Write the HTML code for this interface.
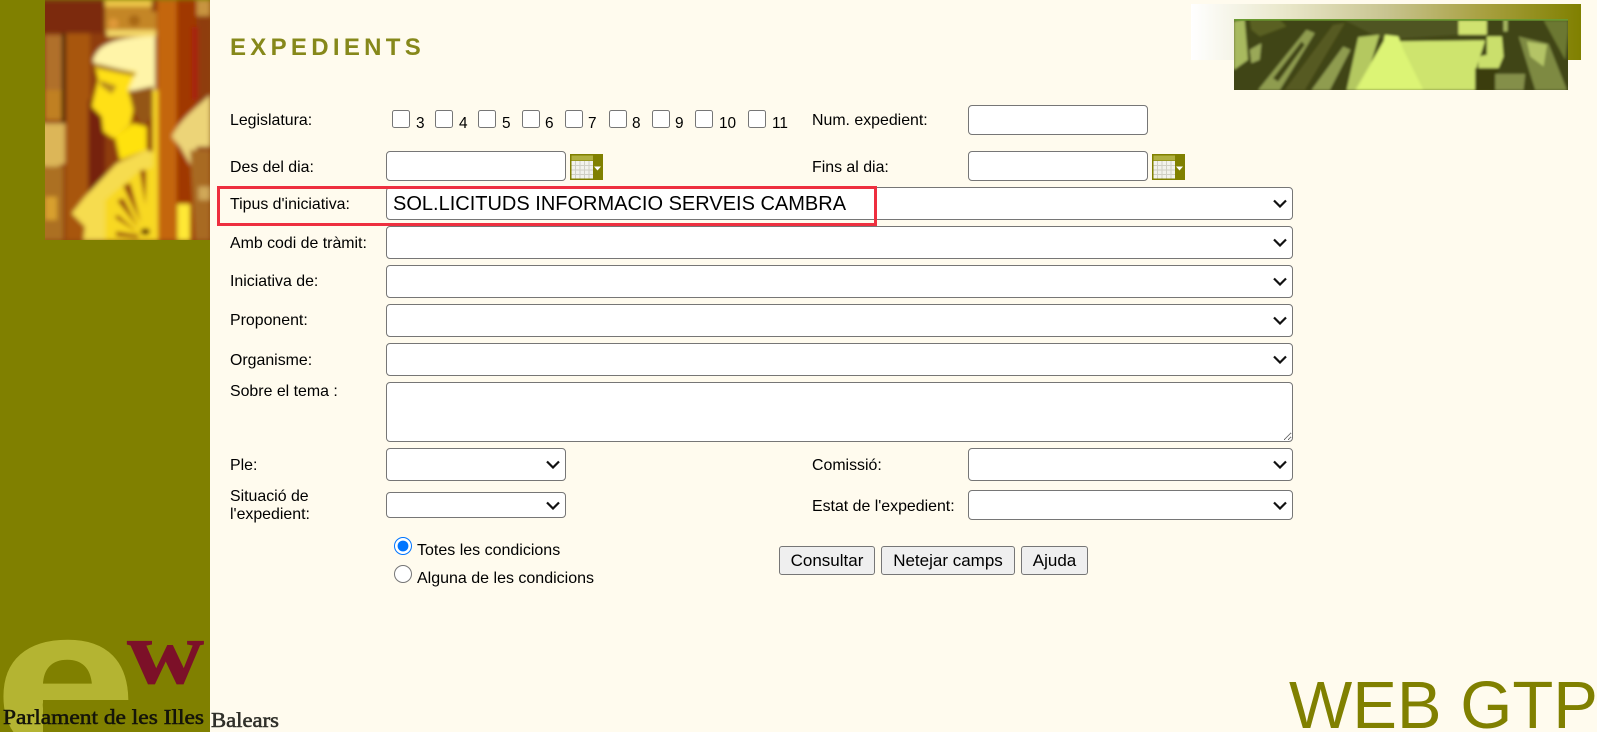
<!DOCTYPE html>
<html lang="ca">
<head>
<meta charset="utf-8">
<title>Expedients</title>
<style>
html,body{margin:0;padding:0;width:1597px;height:732px;overflow:hidden;background:#fffbee;}
body{position:relative;font-family:"Liberation Sans",Arial,sans-serif;color:#000;font-size:15.9px;}
.a{position:absolute;}
.l{position:absolute;line-height:20px;height:20px;white-space:nowrap;}
input[type=text],select,textarea{position:absolute;box-sizing:border-box;border:1px solid #767676;border-radius:4px;background:#fff;margin:0;font-family:"Liberation Sans",Arial,sans-serif;}
select{-webkit-appearance:none;appearance:none;padding:0 0 0 6px;}
input[type=checkbox],input[type=radio]{position:absolute;margin:0;}
input[type=checkbox]{width:18px;height:18px;}
input[type=radio]{width:18px;height:18px;}
button{position:absolute;box-sizing:border-box;border:1px solid #767676;border-radius:3px;background:#efefef;margin:0;padding:0;font:17px "Liberation Sans",Arial,sans-serif;color:#000;top:546px;height:29px;}
.sel{left:386px;width:907px;}
svg{display:block;}
.c{position:absolute;pointer-events:none;}
</style>
</head>
<body>
<div class="a" style="left:0;top:0;width:210px;height:732px;background:#808000;"></div>

<svg class="a" style="left:45px;top:0" width="165" height="240" viewBox="15 0 495 720">
<defs><filter id="b" x="-5%" y="-5%" width="110%" height="110%"><feGaussianBlur stdDeviation="7"/></filter>
<clipPath id="pc"><rect x="15" y="0" width="495" height="720"/></clipPath></defs>
<g clip-path="url(#pc)"><g filter="url(#b)">
<rect x="0" y="0" width="520" height="730" fill="#8f3d08"/>
<rect x="0" y="0" width="200" height="100" fill="#7c2a08"/>
<rect x="15" y="105" width="52" height="170" fill="#b0702a"/>
<rect x="66" y="100" width="10" height="270" fill="#2c1204"/>
<rect x="15" y="270" width="50" height="90" fill="#c08020"/>
<path d="M0 370H75V490L40 505 0 495Z" fill="#dcb658"/>
<path d="M0 500H70V720H0Z" fill="#ac7022"/>
<rect x="15" y="590" width="36" height="70" fill="#d8a02e"/>
<rect x="78" y="100" width="72" height="620" fill="#a8560f"/>
<rect x="145" y="300" width="50" height="300" fill="#76240a"/>
<path d="M195 0H335V35H350V95H195V50Z" fill="#c48628"/>
<path d="M195 0H335V20H195Z" fill="#efc848"/>
<circle cx="220" cy="70" r="15" fill="#e09a38"/><circle cx="283" cy="62" r="17" fill="#a86818"/>
<rect x="200" y="90" width="148" height="20" fill="#f4d868"/>
<path d="M158 185C170 140 205 112 345 108V270L265 272 250 215 170 192Z" fill="#fff4a8"/>
<path d="M165 195L290 215 265 270 270 290 280 330 270 375 220 415 190 395 185 350 155 320 175 240Z" fill="#ffe018"/>
<path d="M170 190L290 220 280 228 170 205Z" fill="#a87a20"/>
<path d="M178 240L230 258 215 282 183 258Z" fill="#b88a1e"/>
<path d="M265 275L340 258V345L310 380 288 345Z" fill="#945612"/>
<path d="M225 410L280 370 320 380V450L240 480Z" fill="#ffe210"/>
<path d="M95 640L135 590 230 490 320 450 350 460V720H130L135 680Z" fill="#f6dc50"/>
<path d="M195 720V600L300 510 350 500V720Z" fill="#f8d820"/>
<path d="M300 512L318 510 316 615ZM250 558L270 548 302 668ZM232 602L250 595 294 682ZM224 652L234 645 292 697ZM228 695L298 705 292 714 228 708Z" fill="#902808"/>
<ellipse cx="316" cy="695" rx="14" ry="10" fill="#5a1806"/>
<rect x="352" y="0" width="58" height="720" fill="#c4660c"/>
<rect x="338" y="270" width="16" height="450" fill="#f8d828"/>
<rect x="410" y="0" width="60" height="720" fill="#a03806"/>
<rect x="455" y="80" width="20" height="220" fill="#a82408"/>
<rect x="412" y="612" width="38" height="108" fill="#ffe836"/>
<path d="M470 0H510V48H470Z" fill="#c89440"/>
<path d="M395 410C420 360 460 330 510 285V440H470L460 510 420 440Z" fill="#ecd478"/>
<path d="M450 450H510V720H465Z" fill="#a86a20"/>
<rect x="475" y="560" width="35" height="40" fill="#d0a858"/>
</g></g>
</svg>

<svg class="a" style="left:0;top:620px" width="300" height="112" viewBox="0 0 300 112">
<defs><clipPath id="lc"><path d="M0 0H210V80H43V112H0Z"/></clipPath></defs>
<g clip-path="url(#lc)"><text transform="translate(-5,131) scale(1.42,1.15)" font-family="Liberation Sans" font-weight="bold" font-size="178" fill="#b4b432" stroke="#b4b432" stroke-width="2">e</text></g>
<text x="127" y="63" font-family="Liberation Serif" font-weight="bold" font-size="91" fill="#7c1028" stroke="#7c1028" stroke-width=".8" textLength="77" lengthAdjust="spacingAndGlyphs">w</text>
<text x="3" y="104" font-family="Liberation Serif" font-size="21" fill="#14140a" stroke="#14140a" stroke-width=".55" textLength="201" lengthAdjust="spacingAndGlyphs">Parlament de les Illes</text>
<text x="211" y="107" font-family="Liberation Serif" font-size="21" fill="#30302a" stroke="#30302a" stroke-width=".55" textLength="68" lengthAdjust="spacingAndGlyphs">Balears</text>
</svg>

<div class="a" style="left:230px;top:34px;font-weight:bold;font-size:24px;line-height:28px;letter-spacing:4.3px;color:#86881a;white-space:nowrap;">EXPEDIENTS</div>

<div class="a" style="left:1191px;top:4px;width:390px;height:56px;background:linear-gradient(90deg,#fff 0%,#e8e6c8 25%,#c8c490 50%,#a8a040 75%,#808000 100%);"></div>
<svg class="a" style="left:1234px;top:19px" width="334" height="71" viewBox="193 58 1000 212" preserveAspectRatio="none">
<defs><filter id="b2"><feGaussianBlur stdDeviation="4"/></filter><clipPath id="tc"><rect x="193" y="58" width="1000" height="212"/></clipPath></defs>
<g clip-path="url(#tc)"><g filter="url(#b2)">
<rect x="180" y="50" width="1030" height="230" fill="#3f4412"/>
<path d="M193 65L225 60 235 180 193 210Z" fill="#a8ba5e"/>
<path d="M240 60H330L350 80 270 110 245 90Z" fill="#5a6024"/>
<path d="M240 150L275 130 270 180 245 190Z" fill="#9aa858"/>
<path d="M265 270L410 90 435 100 330 270Z" fill="#8f9c50"/>
<path d="M310 235L395 125 405 135 325 245Z" fill="#3f4412"/>
<path d="M345 270L490 75 525 70 405 270Z" fill="#565a20"/>
<path d="M425 270L520 140 542 150 480 270Z" fill="#8f9c50"/>
<path d="M520 60H870V105L640 120 600 100Z" fill="#4f5420"/>
<path d="M530 270L565 112 628 105 600 200 570 270Z" fill="#b4c860"/>
<path d="M640 125L945 122 920 200 915 270H555Z" fill="#cee46e"/>
<path d="M645 105L685 110 700 150 760 270H560L640 130Z" fill="#dcf474"/>
<rect x="865" y="62" width="85" height="43" fill="#d0e270"/>
<path d="M950 110H995L1000 170 985 205H925V170L950 165Z" fill="#cadf6c"/>
<path d="M915 205H985L975 270H915Z" fill="#3a3e10"/>
<path d="M975 222H1065L1060 270H975Z" fill="#848f48"/>
<path d="M1045 110L1135 132 1190 270H1095L1070 190Z" fill="#7e8a42"/>
<path d="M1070 125L1130 135 1120 200 1080 170Z" fill="#b4c466"/>
<path d="M1080 62L1120 62 1185 180 1193 100V62Z" fill="#6c7830"/>
<rect x="1000" y="60" width="12" height="35" fill="#a8b860"/>
</g></g>
<rect x="193" y="58" width="1000" height="5" fill="#6a9a30"/>
</svg>

<div class="l" style="left:230px;top:111px">Legislatura:</div>
<input type="checkbox" style="left:392px;top:110px">
<div class="l" style="left:416px;top:114px;font-size:15.4px">3</div>
<input type="checkbox" style="left:435px;top:110px">
<div class="l" style="left:459px;top:114px;font-size:15.4px">4</div>
<input type="checkbox" style="left:478px;top:110px">
<div class="l" style="left:502px;top:114px;font-size:15.4px">5</div>
<input type="checkbox" style="left:522px;top:110px">
<div class="l" style="left:545px;top:114px;font-size:15.4px">6</div>
<input type="checkbox" style="left:565px;top:110px">
<div class="l" style="left:588px;top:114px;font-size:15.4px">7</div>
<input type="checkbox" style="left:609px;top:110px">
<div class="l" style="left:632px;top:114px;font-size:15.4px">8</div>
<input type="checkbox" style="left:652px;top:110px">
<div class="l" style="left:675px;top:114px;font-size:15.4px">9</div>
<input type="checkbox" style="left:695px;top:110px">
<div class="l" style="left:719px;top:114px;font-size:15.4px">10</div>
<input type="checkbox" style="left:748px;top:110px">
<div class="l" style="left:772px;top:114px;font-size:15.4px">11</div>

<div class="l" style="left:812px;top:111px">Num. expedient:</div>
<input type="text" style="left:968px;top:105px;width:180px;height:30px">

<div class="l" style="left:230px;top:158px">Des del dia:</div>
<input type="text" style="left:386px;top:151px;width:180px;height:30px">
<svg class="a" style="left:570px;top:154px" width="33" height="26" viewBox="0 0 33 26">
<rect width="33" height="26" fill="#808000"/>
<rect x="1.5" y="1.5" width="21.5" height="5" fill="#b0b040"/>
<rect x="1.5" y="7" width="21.5" height="17.5" fill="#f2f2ec"/>
<path d="M5.5 7v17.5M10 7v17.5M14.5 7v17.5M19 7v17.5M1.5 11.5h21.5M1.5 16h21.5M1.5 20.5h21.5" stroke="#cfcfc4" stroke-width="1" fill="none"/>
<path d="M24 12.5h7l-3.5 4z" fill="#fff"/>
</svg>
<div class="l" style="left:812px;top:158px">Fins al dia:</div>
<input type="text" style="left:968px;top:151px;width:180px;height:30px">
<svg class="a" style="left:1152px;top:154px" width="33" height="26" viewBox="0 0 33 26">
<rect width="33" height="26" fill="#808000"/>
<rect x="1.5" y="1.5" width="21.5" height="5" fill="#b0b040"/>
<rect x="1.5" y="7" width="21.5" height="17.5" fill="#f2f2ec"/>
<path d="M5.5 7v17.5M10 7v17.5M14.5 7v17.5M19 7v17.5M1.5 11.5h21.5M1.5 16h21.5M1.5 20.5h21.5" stroke="#cfcfc4" stroke-width="1" fill="none"/>
<path d="M24 12.5h7l-3.5 4z" fill="#fff"/>
</svg>

<div class="l" style="left:230px;top:195px">Tipus d'iniciativa:</div>
<select class="sel" style="top:187px;height:33px;font-size:20px;color:#000"><option>SOL.LICITUDS INFORMACIO SERVEIS CAMBRA</option></select>
<svg class="c" style="left:1273px;top:199px" width="14" height="9" viewBox="0 0 14 9"><path d="M1 1.5L7 7.5 13 1.5" fill="none" stroke="#111" stroke-width="2.2"/></svg>
<div class="a" style="left:217px;top:185.5px;width:660px;height:40px;box-sizing:border-box;border:3px solid #ee2f3f;"></div>

<div class="l" style="left:230px;top:234px">Amb codi de tràmit:</div>
<select class="sel" style="top:226px;height:33px"><option></option></select>
<svg class="c" style="left:1273px;top:238px" width="14" height="9" viewBox="0 0 14 9"><path d="M1 1.5L7 7.5 13 1.5" fill="none" stroke="#111" stroke-width="2.2"/></svg>
<div class="l" style="left:230px;top:272px">Iniciativa de:</div>
<select class="sel" style="top:265px;height:33px"><option></option></select>
<svg class="c" style="left:1273px;top:277px" width="14" height="9" viewBox="0 0 14 9"><path d="M1 1.5L7 7.5 13 1.5" fill="none" stroke="#111" stroke-width="2.2"/></svg>
<div class="l" style="left:230px;top:311px">Proponent:</div>
<select class="sel" style="top:304px;height:33px"><option></option></select>
<svg class="c" style="left:1273px;top:316px" width="14" height="9" viewBox="0 0 14 9"><path d="M1 1.5L7 7.5 13 1.5" fill="none" stroke="#111" stroke-width="2.2"/></svg>
<div class="l" style="left:230px;top:351px">Organisme:</div>
<select class="sel" style="top:343px;height:33px"><option></option></select>
<svg class="c" style="left:1273px;top:355px" width="14" height="9" viewBox="0 0 14 9"><path d="M1 1.5L7 7.5 13 1.5" fill="none" stroke="#111" stroke-width="2.2"/></svg>
<div class="l" style="left:230px;top:382px">Sobre el tema :</div>
<textarea class="sel" style="top:382px;height:60px"></textarea>

<div class="l" style="left:230px;top:456px">Ple:</div>
<select style="left:386px;top:448px;width:180px;height:33px"><option></option></select>
<svg class="c" style="left:546px;top:460px" width="14" height="9" viewBox="0 0 14 9"><path d="M1 1.5L7 7.5 13 1.5" fill="none" stroke="#111" stroke-width="2.2"/></svg>
<div class="l" style="left:230px;top:488px;line-height:18px">Situació de<br>l'expedient:</div>
<select style="left:386px;top:492px;width:180px;height:26px"><option></option></select>
<svg class="c" style="left:546px;top:501px" width="14" height="9" viewBox="0 0 14 9"><path d="M1 1.5L7 7.5 13 1.5" fill="none" stroke="#111" stroke-width="2.2"/></svg>
<div class="l" style="left:812px;top:456px">Comissió:</div>
<select style="left:968px;top:448px;width:325px;height:33px"><option></option></select>
<svg class="c" style="left:1273px;top:460px" width="14" height="9" viewBox="0 0 14 9"><path d="M1 1.5L7 7.5 13 1.5" fill="none" stroke="#111" stroke-width="2.2"/></svg>
<div class="l" style="left:812px;top:497px">Estat de l'expedient:</div>
<select style="left:968px;top:490px;width:325px;height:30px"><option></option></select>
<svg class="c" style="left:1273px;top:501px" width="14" height="9" viewBox="0 0 14 9"><path d="M1 1.5L7 7.5 13 1.5" fill="none" stroke="#111" stroke-width="2.2"/></svg>

<input type="radio" name="c" checked style="left:394px;top:537px">
<div class="l" style="left:417px;top:541px;font-size:16px">Totes les condicions</div>
<input type="radio" name="c" style="left:394px;top:565px">
<div class="l" style="left:417px;top:569px;font-size:16px">Alguna de les condicions</div>

<button style="left:779px;width:96px">Consultar</button>
<button style="left:881px;width:134px">Netejar camps</button>
<button style="left:1021px;width:67px">Ajuda</button>

<div class="a" style="left:1289px;top:673px;height:59px;overflow:hidden;font-size:67px;line-height:66px;color:#808000;white-space:nowrap;">WEB GTP</div>
</body>
</html>
